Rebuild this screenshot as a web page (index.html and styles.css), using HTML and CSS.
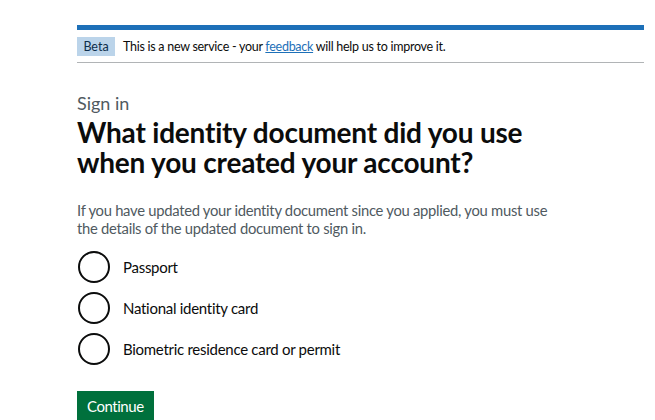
FILE: index.html
```html
<!DOCTYPE html>
<html lang="en">
<head>
<meta charset="utf-8">
<title>Sign in</title>
<link rel="stylesheet" href="styles.css">
</head>
<body>
<div class="page">
  <div class="phase">
    <strong class="tag">Beta</strong>
    <span class="phase-text">This is a new service - your <a href="#" class="link">feedback</a> will help us to improve it.</span>
  </div>
  <main class="main">
    <span class="caption">Sign in</span>
    <h1 class="heading">What identity document did you use when you created your account?</h1>
    <p class="body">If you have updated your identity document since you applied, you must use the details of the updated document to sign in.</p>
    <div class="radios">
      <label class="radio"><span class="circle"></span><span class="radio-label">Passport</span></label>
      <label class="radio"><span class="circle"></span><span class="radio-label">National identity card</span></label>
      <label class="radio"><span class="circle"></span><span class="radio-label">Biometric residence card or permit</span></label>
    </div>
    <button class="button" type="button">Continue</button>
  </main>
</div>
</body>
</html>
```
FILE: styles.css
```css
html, body {
  margin: 0;
  padding: 0;
  background: #ffffff;
}
body {
  font-family: Lato, "Noto Sans", sans-serif;
  color: #0b0c0c;
  overflow: hidden;
}
.page {
  padding: 25px 11px 0 77px;
}
.phase {
  border-top: 5px solid #1d70b8;
  border-bottom: 1px solid #b1b4b6;
  padding: 7px 0 6px;
  display: flex;
  align-items: center;
  gap: 8px;
}
.tag {
  background: #bbd4ea;
  color: #0c2d4a;
  font-weight: 400;
  font-size: 12.5px;
  line-height: 19px;
  height: 19px;
  padding: 0 5px;
  width: 28px;
  text-align: center;
}
.phase-text {
  font-size: 12.5px;
  line-height: 15px;
  letter-spacing: -0.27px;
}
.link {
  color: #1d70b8;
  text-decoration: underline;
}
.main {
  display: flex;
  flex-direction: column;
  align-items: flex-start;
  padding-top: 29px;
}
.caption {
  display: block;
  color: #505a5f;
  font-size: 18px;
  line-height: 22px;
}
.heading {
  margin: 3px 0 0;
  font-size: 28px;
  line-height: 30px;
  font-weight: 700;
  letter-spacing: -0.2px;
  max-width: 470px;
}
.body {
  margin: 24px 0 0;
  font-size: 14.8px;
  line-height: 18px;
  letter-spacing: -0.28px;
  color: #505a5f;
  max-width: 480px;
}
.radios {
  margin-top: 14px;
  display: flex;
  flex-direction: column;
  gap: 9px;
}
.radio {
  display: flex;
  align-items: center;
  gap: 13px;
  height: 32px;
  padding-left: 1px;
}
.circle {
  box-sizing: border-box;
  width: 32px;
  height: 32px;
  border: 2px solid #0b0c0c;
  border-radius: 50%;
  flex: none;
}
.radio-label {
  font-size: 15px;
  line-height: 32px;
  letter-spacing: -0.28px;
}
.button {
  margin-top: 26px;
  background: #00703c;
  color: #ffffff;
  border: 0;
  border-radius: 0;
  font-family: inherit;
  font-size: 15px;
  line-height: 18px;
  letter-spacing: -0.45px;
  padding: 6px 10px 8px;
  box-shadow: 0 2px 0 #002d18;
}
```
